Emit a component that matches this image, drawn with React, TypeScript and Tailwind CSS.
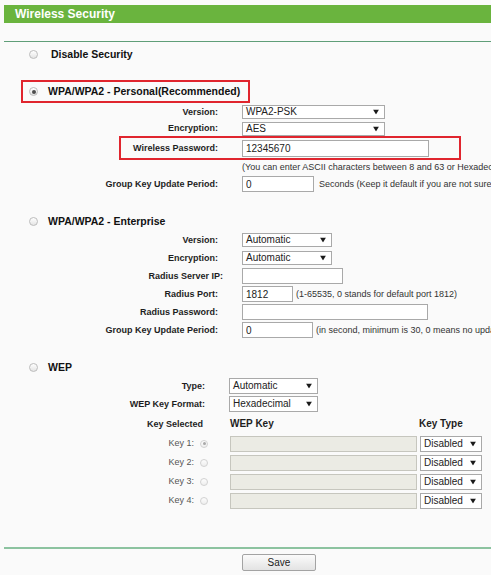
import React from "react";

const Arrow = () => (
  <svg
    width="6"
    height="5"
    viewBox="0 0 6 5"
    className="absolute right-[5px] top-1/2 -translate-y-1/2"
  >
    <path d="M0 0H6L3 5Z" fill="#1a1a1a" />
  </svg>
);

function Select({ cls, value }: { cls: string; value: string }) {
  return (
    <div
      className={`relative flex shrink-0 items-center border border-[#a9a9a9] bg-white pl-[3px] text-[10px] leading-none text-[#222] ${cls}`}
    >
      <span>{value}</span>
      <Arrow />
    </div>
  );
}

function Field({
  cls,
  value = "",
  disabled = false,
}: {
  cls: string;
  value?: string;
  disabled?: boolean;
}) {
  return (
    <input
      readOnly
      value={value}
      disabled={disabled}
      className={`shrink-0 border px-[3px] text-[10px] leading-none text-[#222] outline-none ${
        disabled ? "border-[#c6c6be] bg-[#ebebe4]" : "border-[#a9a9a9] bg-white"
      } ${cls}`}
    />
  );
}

function Radio({
  checked = false,
  small = false,
}: {
  checked?: boolean;
  small?: boolean;
}) {
  return (
    <span
      className={`flex shrink-0 items-center justify-center rounded-full border bg-gradient-to-b ${
        small
          ? "h-[8px] w-[8px] border-[#d2d2d2] from-[#fdfdfd] to-[#eeeeee]"
          : "h-[9px] w-[9px] border-[#bcbcbc] from-[#ffffff] to-[#e4e4e4]"
      }`}
    >
      {checked && (
        <span
          className={`rounded-full ${
            small ? "h-[3px] w-[3px] bg-[#a8a8a8]" : "h-[4px] w-[4px] bg-[#4d4d4d]"
          }`}
        />
      )}
    </span>
  );
}

function Row({
  label,
  labelCls = "w-[218px]",
  gapCls = "ml-[24px]",
  hCls = "h-[18px]",
  children,
}: {
  label: string;
  labelCls?: string;
  gapCls?: string;
  hCls?: string;
  children?: React.ReactNode;
}) {
  return (
    <div className={`flex items-center ${hCls}`}>
      <div
        className={`shrink-0 text-right text-[9px] font-bold leading-none text-[#1e1e1e] ${labelCls}`}
      >
        {label}
      </div>
      <div className={`flex items-center whitespace-nowrap ${gapCls}`}>{children}</div>
    </div>
  );
}

function Hint({ children, cls = "ml-[3px]" }: { children: React.ReactNode; cls?: string }) {
  return (
    <span className={`text-[9px] leading-none text-[#333] ${cls}`}>{children}</span>
  );
}

function KeyRow({ n, checked = false }: { n: number; checked?: boolean }) {
  return (
    <div className="flex h-[19px] items-center">
      <div className="w-[194px] shrink-0 text-right text-[9px] leading-none text-[#555]">
        Key {n}:
      </div>
      <span className="ml-[6px]">
        <Radio small checked={checked} />
      </span>
      <Field disabled cls="ml-[22px] h-[16px] w-[187px]" />
      <Select cls="ml-[3px] h-[16px] w-[62px]" value="Disabled" />
    </div>
  );
}

export default function App() {
  return (
    <div className="relative h-[575px] w-[491px] overflow-hidden bg-[#fafafa] font-['Liberation_Sans',Arial,sans-serif] text-[#1e1e1e]">
      {/* Title bar */}
      <div className="ml-[4px] mt-[5px] flex h-[18px] items-center bg-[#6ab43e] pl-[11px] text-[12px] font-bold leading-none text-white">
        Wireless Security
      </div>
      <div className="ml-[4px] mt-[18px] h-px bg-[#5f9e78]" />

      {/* Disable Security */}
      <div className="mt-[4px] flex h-[16px] items-center">
        <span className="ml-[29px]">
          <Radio />
        </span>
        <span className="ml-[13px] text-[10.5px] font-bold leading-none text-[#111]">
          Disable Security
        </span>
      </div>

      {/* WPA/WPA2 Personal */}
      <div className="ml-[21px] mt-[18px] flex h-[23px] w-[229px] items-center border-2 border-[#e0252e]">
        <span className="ml-[6px]">
          <Radio checked />
        </span>
        <span className="ml-[10px] whitespace-nowrap text-[10.5px] font-bold leading-none text-[#111]">
          WPA/WPA2 - Personal(Recommended)
        </span>
      </div>
      <Row label="Version:">
        <Select cls="h-[14px] w-[143px]" value="WPA2-PSK" />
      </Row>
      <Row label="Encryption:" hCls="h-[15px]">
        <Select cls="h-[14px] w-[143px]" value="AES" />
      </Row>
      <div className="ml-[119px] flex h-[24px] w-[342px] items-center border-2 border-[#e0252e]">
        <div className="w-[97px] shrink-0 text-right text-[9px] font-bold leading-none text-[#1e1e1e]">
          Wireless Password:
        </div>
        <Field cls="ml-[24px] h-[17px] w-[187px]" value="12345670" />
      </div>
      <div className="flex h-[15px] items-center whitespace-nowrap pl-[242px]">
        <Hint cls="">
          (You can enter ASCII characters between 8 and 63 or Hexadecimal characters
          between 8 and 64.)
        </Hint>
      </div>
      <Row label="Group Key Update Period:">
        <Field cls="h-[16px] w-[72px]" value="0" />
        <Hint cls="ml-[5px]">
          Seconds (Keep it default if you are not sure, minimum is 30, 0 means no
          update)
        </Hint>
      </Row>

      {/* WPA/WPA2 Enterprise */}
      <div className="mt-[20px] flex h-[17px] items-center">
        <span className="ml-[29px]">
          <Radio />
        </span>
        <span className="ml-[10px] text-[10.5px] font-bold leading-none text-[#111]">
          WPA/WPA2 - Enterprise
        </span>
      </div>
      <div className="mt-[1px]">
        <Row label="Version:">
          <Select cls="h-[14px] w-[90px]" value="Automatic" />
        </Row>
        <Row label="Encryption:">
          <Select cls="h-[14px] w-[90px]" value="Automatic" />
        </Row>
        <Row label="Radius Server IP:" labelCls="w-[223px]" gapCls="ml-[19px]">
          <Field cls="h-[16px] w-[101px]" />
        </Row>
        <Row label="Radius Port:">
          <Field cls="h-[16px] w-[51px]" value="1812" />
          <Hint>(1-65535, 0 stands for default port 1812)</Hint>
        </Row>
        <Row label="Radius Password:">
          <Field cls="h-[16px] w-[186px]" />
        </Row>
        <Row label="Group Key Update Period:">
          <Field cls="h-[16px] w-[71px]" value="0" />
          <Hint>(in second, minimum is 30, 0 means no update)</Hint>
        </Row>
      </div>

      {/* WEP */}
      <div className="mt-[20px] flex h-[16px] items-center">
        <span className="ml-[29px]">
          <Radio />
        </span>
        <span className="ml-[10px] text-[10.5px] font-bold leading-none text-[#111]">
          WEP
        </span>
      </div>
      <div className="mt-[2px]">
        <Row label="Type:" labelCls="w-[205px]" gapCls="ml-[24px]">
          <Select cls="h-[16px] w-[89px]" value="Automatic" />
        </Row>
        <Row label="WEP Key Format:" labelCls="w-[205px]" gapCls="ml-[24px]">
          <Select cls="h-[16px] w-[89px]" value="Hexadecimal" />
        </Row>
      </div>
      <div className="mt-[2px] flex h-[18px] items-center whitespace-nowrap">
        <div className="w-[203px] shrink-0 text-right text-[9px] font-bold leading-none">
          Key Selected
        </div>
        <div className="ml-[27px] w-[189px] shrink-0 text-[10px] font-bold leading-none">
          WEP Key
        </div>
        <div className="text-[10px] font-bold leading-none">Key Type</div>
      </div>
      <div className="mt-[1px]">
        <KeyRow n={1} checked />
        <KeyRow n={2} />
        <KeyRow n={3} />
        <KeyRow n={4} />
      </div>

      {/* Footer */}
      <div className="ml-[4px] mt-[37px] h-[2px] bg-[#8cc3a0]" />
      <div className="mt-[5px] pl-[242px]">
        <button className="flex h-[17px] w-[74px] items-center justify-center rounded-[2px] border border-[#a3a3a3] bg-gradient-to-b from-[#fbfbfb] to-[#e3e3e3] text-[10px] leading-none text-[#222]">
          Save
        </button>
      </div>
    </div>
  );
}
